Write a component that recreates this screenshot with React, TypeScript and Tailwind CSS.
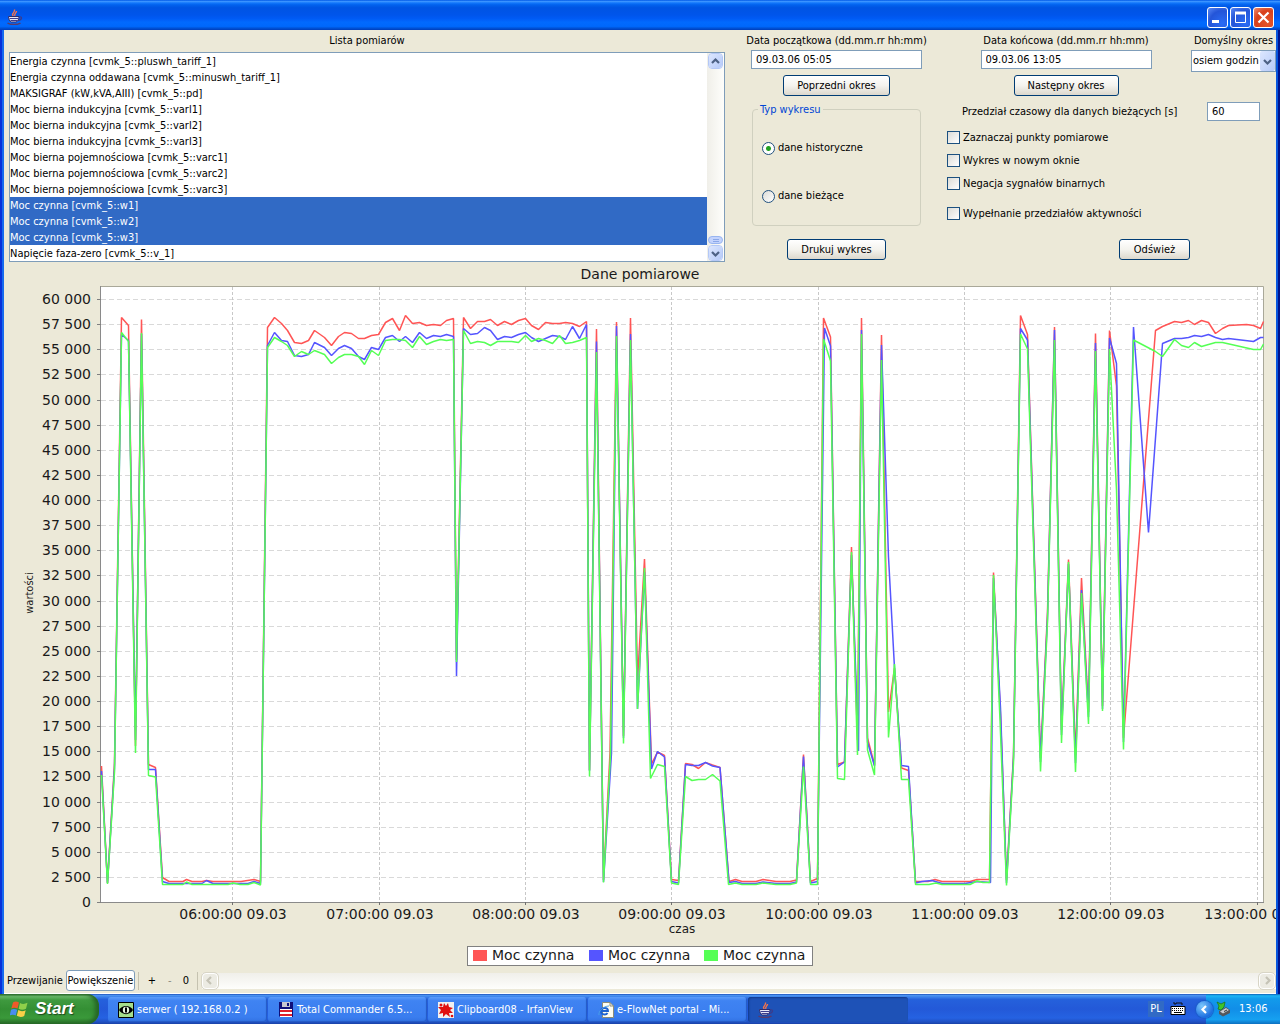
import React, { useState } from "react";

type Point = [number, number];

const signals = [
  "Energia czynna [cvmk_5::pluswh_tariff_1]",
  "Energia czynna oddawana [cvmk_5::minuswh_tariff_1]",
  "MAKSIGRAF (kW,kVA,AIII) [cvmk_5::pd]",
  "Moc bierna indukcyjna [cvmk_5::varl1]",
  "Moc bierna indukcyjna [cvmk_5::varl2]",
  "Moc bierna indukcyjna [cvmk_5::varl3]",
  "Moc bierna pojemnościowa [cvmk_5::varc1]",
  "Moc bierna pojemnościowa [cvmk_5::varc2]",
  "Moc bierna pojemnościowa [cvmk_5::varc3]",
  "Moc czynna [cvmk_5::w1]",
  "Moc czynna [cvmk_5::w2]",
  "Moc czynna [cvmk_5::w3]",
  "Napięcie faza-zero [cvmk_5::v_1]",
];

const red: Point[] = [
  [101.5, 766], [107.5, 883], [114.5, 763], [121.5, 317.5], [128.5, 325.5], [135.5, 746], [141.5, 319.5], [148.5, 764.5], [155.5, 767.5],
  [162.5, 877.5], [169, 881.5], [183, 881.5], [186.5, 879.5], [192, 881.5], [202, 881.5], [206.5, 880.5], [213, 881.5], [241, 881.5], [254, 879.5], [260.5, 881.5],
  [267.5, 327.5], [274.5, 317.5], [281.5, 323.5], [287.5, 330.5], [294.5, 342.5], [301.5, 343.5], [308.5, 340.5], [314.5, 330.5], [324.5, 337.5], [331.5, 345.5],
  [338.5, 336.5], [344.5, 332.5], [351.5, 333.5], [358.5, 338.5], [364.5, 338.5], [371.5, 335.5], [378.5, 334.5], [385.5, 322.5], [392.5, 318.5], [399.5, 330.5],
  [405.5, 315.5], [412.5, 323.5], [419.5, 322.5], [426.5, 325.5], [433.5, 324.5], [440.5, 325.5], [446.5, 320.5], [453.5, 318.5], [456.5, 660], [463.5, 317.5],
  [470.5, 328.5], [477.5, 321.5], [484.5, 321.5], [490.5, 319.5], [497.5, 325.5], [504.5, 321.5], [511.5, 324.5], [518.5, 320.5], [525.5, 318.5], [531.5, 325.5],
  [538.5, 329.5], [545.5, 322.5], [552.5, 323.5], [559.5, 323.5], [565.5, 322.5], [572.5, 323.5], [579.5, 326.5], [586.5, 321.5], [589.5, 770], [596.5, 329],
  [603.5, 880], [610, 753], [616.5, 322], [623.5, 736], [630.5, 318], [637.5, 680], [644.5, 559], [651.5, 764], [657.5, 752], [664.5, 755.5],
  [671.5, 879.5], [678.5, 880.5], [685.5, 763.5], [692, 764.5], [698.5, 768.5], [705.5, 762.5], [712.5, 765], [720, 767.5], [729, 881.5], [735.5, 879.5],
  [742, 881.5], [756, 881.5], [763, 879.5], [776, 881.5], [790, 881.5], [796.5, 880], [803.5, 754.5], [810.5, 881.5], [817.5, 878.5], [823.5, 318],
  [830.5, 337], [837.5, 764.5], [844.5, 762], [851.5, 547], [857.5, 740], [861.5, 318], [867.5, 738], [874.5, 765], [881.5, 335], [888.5, 712],
  [894.5, 668], [901.5, 768], [908.5, 770.5], [915.5, 881.5], [928, 881.5], [935, 879.5], [942, 881.5], [970, 881.5], [977, 879.5], [989.5, 879.5],
  [993.5, 572.5], [1000.5, 715], [1006.5, 880], [1013.5, 755], [1020.5, 315.5], [1027.5, 334.5], [1040.5, 758], [1047.5, 612], [1054.5, 327], [1061.5, 730],
  [1068.5, 559.5], [1075.5, 755], [1081.5, 578], [1088.5, 712], [1095.5, 333.5], [1102.5, 706], [1109.5, 330.5], [1116.5, 386], [1123.5, 738], [1155.5, 330.5],
  [1162.5, 326.5], [1174.5, 321.5], [1181.5, 322.5], [1188.5, 320.5], [1194.5, 324.5], [1201.5, 320.5], [1208.5, 322.5], [1215.5, 333.5], [1222.5, 328.5],
  [1228.5, 325.5], [1246.5, 324.5], [1253.5, 325.5], [1260.5, 328.5], [1263.5, 321.5],
];

const blue: Point[] = [
  [101.5, 771], [107.5, 883], [114.5, 768], [121.5, 334.5], [128.5, 340.5], [135.5, 740], [141.5, 334], [148.5, 769.5], [155.5, 769.5],
  [162.5, 881.5], [169, 883.5], [202, 883.5], [206.5, 880.5], [213, 883.5], [248, 883.5], [254, 881.5], [260.5, 883.5],
  [267.5, 345.5], [274.5, 332.5], [281.5, 340.5], [287.5, 341.5], [294.5, 355.5], [301.5, 356.5], [308.5, 354.5], [314.5, 342.5], [324.5, 347.5], [331.5, 355.5],
  [338.5, 348.5], [344.5, 345.5], [351.5, 348.5], [358.5, 356.5], [364.5, 359.5], [371.5, 347.5], [378.5, 349.5], [385.5, 337.5], [392.5, 335.5], [399.5, 341.5],
  [405.5, 336.5], [412.5, 342.5], [419.5, 332.5], [426.5, 338.5], [433.5, 335.5], [440.5, 336.5], [446.5, 334.5], [453.5, 336.5], [456.5, 676], [463.5, 328.5],
  [470.5, 334.5], [477.5, 333.5], [484.5, 327.5], [490.5, 330.5], [497.5, 339.5], [504.5, 336.5], [511.5, 337.5], [518.5, 334.5], [525.5, 332.5], [531.5, 337.5],
  [538.5, 341.5], [545.5, 338.5], [552.5, 335.5], [559.5, 336.5], [565.5, 339.5], [572.5, 326.5], [579.5, 338.5], [586.5, 324.5], [589.5, 771], [596.5, 341.5],
  [603.5, 882], [611.5, 753], [616.5, 326], [623.5, 738], [630.5, 334], [637.5, 709], [644.5, 572], [651.5, 769], [657.5, 751.5], [664.5, 757],
  [671.5, 881.5], [678.5, 883], [685.5, 764.5], [692, 765.5], [698.5, 765.5], [705.5, 762.5], [712.5, 766], [720, 767.5], [729, 882.5], [735.5, 881.5],
  [742, 883.5], [756, 883.5], [763, 882], [776, 883.5], [790, 883.5], [796.5, 882], [803.5, 756.5], [810.5, 883], [817.5, 881.5], [824.5, 328],
  [830.5, 346], [837.5, 767], [844.5, 762], [851.5, 555], [858.5, 751], [861.5, 330], [867.5, 742], [874.5, 766], [881.5, 345], [888.5, 557],
  [894.5, 668], [901.5, 765.5], [908.5, 766.5], [915.5, 883], [922, 881.5], [932, 880.5], [942, 883.5], [965, 883.5], [977, 881.5], [990.5, 882.5],
  [993.5, 578], [1000.5, 708], [1006.5, 883], [1013.5, 758], [1020.5, 328.5], [1027.5, 340], [1040.5, 762], [1047.5, 618], [1054.5, 330], [1061.5, 735],
  [1068.5, 564], [1075.5, 763], [1081.5, 590], [1088.5, 717], [1095.5, 343], [1102.5, 709], [1109.5, 338], [1116.5, 363.5], [1123.5, 742], [1133.5, 327],
  [1148.5, 532.5], [1162.5, 343.5], [1174.5, 338.5], [1181.5, 338.5], [1188.5, 337.5], [1194.5, 335.5], [1201.5, 336.5], [1208.5, 334.5], [1215.5, 337.5],
  [1222.5, 339.5], [1228.5, 338.5], [1253.5, 341.5], [1260.5, 337.5], [1263.5, 337.5],
];

const green: Point[] = [
  [101.5, 775], [107.5, 884], [114.5, 772], [121.5, 332.5], [128.5, 341.5], [135.5, 753], [141.5, 333], [148.5, 775.5], [155.5, 777],
  [162.5, 884.5], [183, 884.5], [186.5, 882], [192, 884.5], [228, 884.5], [233, 883], [240, 884.5], [248, 884.5], [254, 882.5], [260.5, 885],
  [267.5, 347.5], [274.5, 337.5], [281.5, 341.5], [287.5, 345.5], [294.5, 356.5], [301.5, 351.5], [308.5, 354.5], [314.5, 350.5], [324.5, 354.5], [331.5, 363.5],
  [338.5, 357.5], [344.5, 354.5], [351.5, 354.5], [358.5, 356.5], [364.5, 364.5], [371.5, 350.5], [378.5, 355.5], [385.5, 340.5], [392.5, 339.5], [399.5, 339.5],
  [405.5, 340.5], [412.5, 347.5], [419.5, 336.5], [426.5, 344.5], [433.5, 341.5], [440.5, 339.5], [446.5, 340.5], [453.5, 339.5], [456.5, 662], [463.5, 330.5],
  [470.5, 343.5], [477.5, 341.5], [484.5, 342.5], [490.5, 345.5], [497.5, 341.5], [504.5, 341.5], [511.5, 341.5], [518.5, 342.5], [525.5, 335.5], [531.5, 341.5],
  [538.5, 338.5], [545.5, 340.5], [552.5, 343.5], [559.5, 335.5], [565.5, 343.5], [572.5, 342.5], [579.5, 340.5], [586.5, 337.5], [589.5, 776.5], [596.5, 352],
  [603.5, 882.5], [610.5, 755], [616.5, 336], [623.5, 743.5], [630.5, 340], [637.5, 709], [644.5, 568], [650.5, 778.5], [657.5, 764.5], [664.5, 766.5],
  [671.5, 883], [678.5, 884.5], [685.5, 776.5], [692, 780.5], [698.5, 779.5], [705.5, 779.5], [712.5, 774.5], [720, 781], [728.5, 884.5], [735.5, 883],
  [742, 884.5], [756, 884.5], [763, 883], [776, 884.5], [790, 884.5], [796.5, 883], [803.5, 766.5], [810.5, 884.5], [817.5, 884.5], [823.5, 339],
  [830.5, 361], [837.5, 778.5], [844.5, 779.5], [851.5, 552], [857.5, 755], [861.5, 334], [867.5, 750], [874.5, 775], [881.5, 360], [888.5, 737.5],
  [894.5, 664], [901.5, 779.5], [908.5, 779.5], [915.5, 884.5], [929, 884.5], [936, 883], [942, 884.5], [970, 884.5], [977, 881], [983, 882.5], [989.5, 882.5],
  [993.5, 575], [1000, 720], [1006.5, 885.5], [1013.5, 763], [1020.5, 334], [1027.5, 349], [1040.5, 771.5], [1047.5, 622], [1054.5, 340], [1061.5, 743],
  [1068.5, 562], [1075.5, 772], [1081.5, 593], [1088.5, 724], [1095.5, 351], [1102.5, 711], [1109.5, 349], [1116.5, 490], [1123.5, 749.5], [1133.5, 340],
  [1155.5, 351.5], [1162.5, 356.5], [1174.5, 339.5], [1181.5, 345.5], [1188.5, 347.5], [1194.5, 342.5], [1201.5, 346.5], [1208.5, 344.5], [1215.5, 342.5],
  [1222.5, 342.5], [1253.5, 349.5], [1260.5, 349.5], [1263.5, 344],
];

const yTicks = Array.from({ length: 25 }, (_, i) => {
  const value = i * 2500;
  const label = value < 1000 ? String(value) : `${Math.floor(value / 1000)} ${String(value % 1000).padStart(3, "0")}`;
  return { label, y: Math.round(902 - i * 25.125) + 0.5 };
});

const xTicks = [232.5, 379.5, 525.5, 671.5, 818.5, 964.5, 1110.5, 1257.5].map((x, i) => ({
  x,
  label: `${String(i + 6).padStart(2, "0")}:00:00 09.03`,
}));

const toPoints = (p: Point[]) => p.map((q) => q.join(",")).join(" ");

const legend = [
  { x: 473, color: "#ff5555" },
  { x: 589, color: "#5555ff" },
  { x: 704, color: "#55ff55" },
];

function Chart() {
  return (
    <svg
      viewBox="4 262 1272 706"
      className="block w-full font-['DejaVu_Sans',sans-serif] text-[14px]"
      fill="#1a1a1a"
      role="img"
      aria-label="Dane pomiarowe"
    >
      <text x="640" y="279" textAnchor="middle">Dane pomiarowe</text>
      <rect x="100.5" y="286.5" width="1163" height="616" fill="#fff" />
      <g stroke="#d9d9d9" strokeDasharray="5 3" strokeWidth="1">
        {yTicks.map((t) => (
          <line key={t.y} x1="101" x2="1263" y1={t.y} y2={t.y} />
        ))}
      </g>
      <g stroke="#c8c8c8" strokeDasharray="3 2" strokeWidth="1">
        {xTicks.map((t) => (
          <line key={t.x} x1={t.x} x2={t.x} y1="287" y2="902" />
        ))}
      </g>
      <path d="M100.5 286.5H1263.5V902.5" fill="none" stroke="#a9a899" />
      <path d="M100.5 286V902.5H1264" fill="none" stroke="#8a8a8a" />
      {yTicks.map((t) => (
        <g key={t.y}>
          <line x1="97" x2="101" y1={t.y} y2={t.y} stroke="#808080" />
          <text x="91" y={t.y + 4.5} textAnchor="end">{t.label}</text>
        </g>
      ))}
      {xTicks.map((t) => (
        <g key={t.x}>
          <line x1={t.x} x2={t.x} y1="902" y2="905" stroke="#707070" />
          <text x={t.x + 0.5} y="919" textAnchor="middle">{t.label}</text>
        </g>
      ))}
      <g fill="none" strokeWidth="1.5" strokeLinejoin="bevel">
        <polyline points={toPoints(red)} stroke="#ff5555" />
        <polyline points={toPoints(blue)} stroke="#5555ff" />
        <polyline points={toPoints(green)} stroke="#55ff55" />
      </g>
      <text x="682" y="933" textAnchor="middle" className="text-[12px]">czas</text>
      <text transform="translate(33 593) rotate(-90)" textAnchor="middle" className="font-['DejaVu_Sans_Condensed','DejaVu_Sans',sans-serif] text-[11px]">
        wartości
      </text>
      <rect x="467.5" y="946.5" width="345" height="19" fill="#fff" stroke="#808080" />
      {legend.map((l) => (
        <g key={l.x}>
          <rect x={l.x} y="950" width="14" height="11" fill={l.color} />
          <text x={l.x + 19} y="960">Moc czynna</text>
        </g>
      ))}
    </svg>
  );
}

function JavaIcon() {
  return (
    <svg width="16" height="16" viewBox="0 0 16 16" fill="none" aria-hidden="true">
      <path d="M6.500 7C3.500 5 8.500 3.500 7.500 .5M8 7C6.500 5 9.500 4 9.500 2" stroke="#f4734a" strokeWidth="1.400" />
      <path d="M1.500 7.500H12C12 10 11 12.500 9 13H4.500C2.500 12.500 1.500 10 1.500 7.500Z" fill="#e6e6f6" stroke="#2c2c70" />
      <path d="M2.500 9.500H11.500M3.500 11.500H10.500" stroke="#3c3c8c" />
      <path d="M12 8C15.500 7 15.500 11 11 11.500" stroke="#3c3c8c" strokeWidth="1.300" />
      <path d="M.5 14C3 16 11 16 13.500 14" stroke="#5b3a68" strokeWidth="1.500" />
    </svg>
  );
}

function Chevron({ dir, color = "#4d6185" }: { dir: "up" | "down" | "left" | "right"; color?: string }) {
  const d = {
    up: "M1 6L4.500 2.500L8 6",
    down: "M1 3L4.500 6.500L8 3",
    left: "M6 1L2.500 4.500L6 8",
    right: "M3 1L6.500 4.500L3 8",
  }[dir];
  return (
    <svg width="9" height="9" viewBox="0 0 9 9" fill="none" aria-hidden="true">
      <path d={d} stroke={color} strokeWidth="2.200" />
    </svg>
  );
}

function ScrollButton({ dir }: { dir: "up" | "down" }) {
  return (
    <button
      aria-label={dir === "up" ? "Przewiń w górę" : "Przewiń w dół"}
      className="flex h-4 w-full items-center justify-center rounded-sm border border-white bg-linear-to-br from-[#dde7fe] to-[#b5c9f8] outline outline-[#b4c8f6] -outline-offset-1"
    >
      <Chevron dir={dir} />
    </button>
  );
}

function SwingButton({ className, children }: { className: string; children: React.ReactNode }) {
  return (
    <button className={`h-[21px] rounded-[3px] border border-[#003c74] bg-linear-to-b from-white via-[#f4f3ee] to-[#dcd8cd] whitespace-nowrap ${className}`}>
      {children}
    </button>
  );
}

function Field({ id, value, className }: { id: string; value: string; className: string }) {
  return <input id={id} defaultValue={value} className={`h-[19px] border border-[#7f9db9] bg-white px-1 outline-none ${className}`} />;
}

function Radio({ label, checked }: { label: string; checked?: boolean }) {
  return (
    <label className="flex h-4 items-center gap-[3px] whitespace-nowrap">
      <input
        type="radio"
        name="chart-type"
        defaultChecked={checked}
        className="size-[13px] appearance-none rounded-full border border-[#21517f] bg-linear-to-br from-[#dcdcd7] to-white checked:bg-[radial-gradient(circle,#22a122_0_2px,#ffffff_3px)]"
      />
      <span className="leading-[18px]">{label}</span>
    </label>
  );
}

function Check({ label }: { label: string }) {
  return (
    <label className="flex h-[23px] items-center gap-[3px] whitespace-nowrap">
      <input
        type="checkbox"
        className="size-[13px] appearance-none border border-[#1c5180] bg-linear-to-br from-[#dcdcd7] to-white checked:bg-[#22a122]"
      />
      {label}
    </label>
  );
}

function TitleBar() {
  const btn = "flex size-[21px] items-center justify-center rounded-[3px] border border-white";
  return (
    <header className="flex h-[30px] items-center justify-between bg-[linear-gradient(180deg,#0058e6_0,#3a93ff_5%,#1277fb_10%,#0262ee_16%,#0054e3_26%,#0055eb_50%,#005bf5_62%,#026afe_74%,#0068fb_88%,#0052d6_94%,#003dba_100%)] pt-1 pr-1.5 pl-[7px]">
      <JavaIcon />
      <div className="flex gap-0.5">
        <button aria-label="Minimalizuj" className={`${btn} bg-[radial-gradient(circle_at_75%_80%,#2a6cf5,#2455d8_60%,#5b8af5)]`}>
          <svg width="13" height="13" viewBox="0 0 13 13" aria-hidden="true"><path d="M1 9H8V12H1Z" fill="#fff" /></svg>
        </button>
        <button aria-label="Maksymalizuj" className={`${btn} bg-[radial-gradient(circle_at_75%_80%,#2a6cf5,#2455d8_60%,#5b8af5)]`}>
          <svg width="13" height="13" viewBox="0 0 13 13" fill="none" aria-hidden="true"><path d="M1.500 2V11.500H11.500V2" stroke="#fff" /><path d="M1 2H12" stroke="#fff" strokeWidth="3" /></svg>
        </button>
        <button aria-label="Zamknij" className={`${btn} bg-[radial-gradient(circle_at_75%_80%,#e4552a,#d8401c_60%,#ee8f75)]`}>
          <svg width="13" height="13" viewBox="0 0 13 13" aria-hidden="true"><path d="M1.500 1.500L11.500 11.500M11.500 1.500L1.500 11.500" stroke="#fff" strokeWidth="2.200" /></svg>
        </button>
      </div>
    </header>
  );
}

function SignalList() {
  const [selected, setSelected] = useState<number[]>([9, 10, 11]);
  const toggle = (i: number) => setSelected((s) => (s.includes(i) ? s.filter((n) => n !== i) : [...s, i]));
  return (
    <section className="min-w-0 flex-1 pl-[5px]">
      <h2 id="list-label" className="flex h-[22px] items-center justify-center">Lista pomiarów</h2>
      <div className="flex border border-[#7f9db9] bg-white">
        <ul role="listbox" aria-multiselectable="true" aria-labelledby="list-label" className="min-w-0 flex-1">
          {signals.map((s, i) => (
            <li
              key={s}
              role="option"
              aria-selected={selected.includes(i)}
              onClick={() => toggle(i)}
              className="h-4 truncate leading-[18px] aria-selected:bg-[#316ac5] aria-selected:text-white"
            >
              {s}
            </li>
          ))}
        </ul>
        <div className="flex w-[17px] flex-col bg-linear-to-r from-[#f0efe9] to-[#fefefb] px-px">
          <ScrollButton dir="up" />
          <div className="flex flex-1 items-end">
            <div className="mb-px flex h-2 w-full flex-col items-center justify-center gap-px rounded-sm border border-[#98b5f0] bg-[#c3d3fd]">
              <span className="h-px w-1.5 bg-[#8ba8e8]" />
              <span className="h-px w-1.5 bg-[#8ba8e8]" />
            </div>
          </div>
          <ScrollButton dir="down" />
        </div>
      </div>
    </section>
  );
}

function Controls() {
  return (
    <section className="flex w-[551px] shrink-0 pl-[26px]">
      <div className="flex w-[171px] shrink-0 flex-col items-center">
        <label htmlFor="start" className="h-5 leading-[22px] whitespace-nowrap">Data początkowa (dd.mm.rr hh:mm)</label>
        <Field id="start" value="09.03.06 05:05" className="w-full" />
        <SwingButton className="mt-1.5 w-[107px]">Poprzedni okres</SwingButton>
        <fieldset className="mt-2 h-[122px] w-[169px] rounded-[4px] border border-[#d0d0bf] pl-[9px]">
          <legend className="-ml-1 px-0.5 leading-[11px] text-[#0046d5]">Typ wykresu</legend>
          <div className="flex flex-col gap-8 pt-[25px]">
            <Radio label="dane historyczne" checked />
            <Radio label="dane bieżące" />
          </div>
        </fieldset>
        <SwingButton className="mt-[13px] w-[99px]">Drukuj wykres</SwingButton>
      </div>
      <div className="ml-[25px] flex flex-1 flex-col">
        <div className="flex justify-between">
          <div className="flex w-[238px] flex-col items-center">
            <label htmlFor="end" className="h-5 leading-[22px] whitespace-nowrap">Data końcowa (dd.mm.rr hh:mm)</label>
            <Field id="end" value="09.03.06 13:05" className="w-[171px]" />
            <SwingButton className="mt-1.5 w-[105px]">Następny okres</SwingButton>
          </div>
          <div className="flex w-[85px] flex-col items-center">
            <label htmlFor="period" className="h-5 leading-[22px] whitespace-nowrap">Domyślny okres</label>
            <div className="relative w-full">
              <select id="period" className="h-[22px] w-full appearance-none border border-[#7f9db9] bg-white pl-px outline-none">
                <option>osiem godzin</option>
              </select>
              <span className="pointer-events-none absolute inset-y-px right-px flex w-[15px] items-center justify-center rounded-[2px] bg-linear-to-br from-[#dde7fe] to-[#b5c9f8]">
                <Chevron dir="down" />
              </span>
            </div>
          </div>
        </div>
        <div className="mt-1.5 mr-4 mb-[5px] ml-[15px] flex items-center justify-between">
          <label htmlFor="interval" className="whitespace-nowrap">Przedział czasowy dla danych bieżących [s]</label>
          <Field id="interval" value="60" className="w-[53px]" />
        </div>
        <Check label="Zaznaczaj punkty pomiarowe" />
        <Check label="Wykres w nowym oknie" />
        <Check label="Negacja sygnałów binarnych" />
        <div className="mt-[7px]">
          <Check label="Wypełnanie przedziałów aktywności" />
        </div>
        <SwingButton className="mt-3.5 mr-[86px] w-[71px] self-end">Odśwież</SwingButton>
      </div>
    </section>
  );
}

function ZoomBar() {
  return (
    <div className="flex h-[26px] items-center border-b border-white pl-[3px]">
      <button className="whitespace-nowrap">Przewijanie</button>
      <button className="ml-[3px] h-[21px] w-[69px] rounded-[3px] border border-[#7f9db9] bg-white whitespace-nowrap">Powiększenie</button>
      <span className="ml-[3px] h-[18px] w-px bg-[#c5c2b0]" />
      <button className="ml-[5px] w-4">+</button>
      <button className="ml-0.5 w-4 text-[#8a8a80]">-</button>
      <button className="w-4">0</button>
      <span className="ml-[3px] h-[18px] w-px bg-[#c5c2b0]" />
      <div className="ml-1 flex h-4 flex-1 items-center justify-between bg-linear-to-b from-[#f0efea] to-[#fefefc]">
        <button aria-label="W lewo" className="flex size-4 items-center justify-center rounded-sm border border-white bg-[#ecebe3] outline outline-[#d8d5c6]">
          <Chevron dir="left" color="#c5c3b6" />
        </button>
        <button aria-label="W prawo" className="mr-px flex size-4 items-center justify-center rounded-sm border border-white bg-[#ecebe3] outline outline-[#d8d5c6]">
          <Chevron dir="right" color="#c5c3b6" />
        </button>
      </div>
    </div>
  );
}

function EyeIcon() {
  return (
    <svg width="16" height="16" viewBox="0 0 16 16" aria-hidden="true">
      <path d="M.5 .5H15.500V15.500H.5Z" fill="#a5dd8c" stroke="#000" />
      <path d="M1 8C4 2.500 12 2.500 15 8C12 13.500 4 13.500 1 8Z" fill="#000" />
      <circle cx="8" cy="8" r="3.200" fill="#e8f8e0" />
      <path d="M7 5.500H9V10.500H7Z" fill="#000" />
    </svg>
  );
}

function DiskIcon() {
  return (
    <svg width="16" height="16" viewBox="0 0 16 16" aria-hidden="true">
      <path d="M1 0H15V15H2L1 14Z" fill="#10107a" />
      <path d="M4 0H12V5H4Z" fill="#c8c8d0" />
      <path d="M9 1H11V4H9Z" fill="#10107a" />
      <path d="M2 7H14V15H2Z" fill="#fff" />
      <path d="M2 8H14V10H2ZM2 12H14V14H2Z" fill="#e0202a" />
    </svg>
  );
}

function IrfanIcon() {
  return (
    <svg width="16" height="16" viewBox="0 0 16 16" aria-hidden="true">
      <path d="M0 0H16V16H0Z" fill="#f0f0f0" />
      <path d="M6 1L8 4L10 1L11 5L15 6L12 8L15 11L11 11L12 15L8 12L5 15V11L1 12L3 8L0 5L5 5Z" fill="#e01010" />
      <circle cx="3" cy="3" r="1.500" fill="#e01010" />
      <circle cx="14" cy="14" r="1.300" fill="#e01010" />
    </svg>
  );
}

function IeIcon() {
  return (
    <svg width="16" height="16" viewBox="0 0 16 16" fill="none" aria-hidden="true">
      <path d="M4.500 .5H12L15.500 4V15.500H4.500Z" fill="#fffdf0" stroke="#8c8c78" />
      <path d="M12 .5V4H15.500" stroke="#8c8c78" />
      <path d="M3 9H10C10 5 3.500 5 3 9C3 13 8 13.500 9.500 11" stroke="#1e62d0" strokeWidth="1.900" />
      <path d="M1 13C0 10 5 4 11 4" stroke="#4aa0e8" />
    </svg>
  );
}

const tasks = [
  { label: "serwer ( 192.168.0.2 )", icon: <EyeIcon /> },
  { label: "Total Commander 6.5...", icon: <DiskIcon /> },
  { label: "Clipboard08 - IrfanView", icon: <IrfanIcon /> },
  { label: "e-FlowNet portal - Mi...", icon: <IeIcon /> },
];

function Taskbar() {
  return (
    <footer className="flex h-[30px] bg-[linear-gradient(180deg,#1c4fb8_0,#4a92f0_5%,#3a80ea_10%,#2561dc_18%,#2359d8_50%,#2562e2_80%,#1f4fc0_94%,#1941a5_100%)] text-white">
      <button className="flex w-[99px] shrink-0 items-center gap-1.5 rounded-r-xl bg-[linear-gradient(180deg,#2f6f2f_0,#6cbb6c_8%,#3f9a3f_20%,#348f34_50%,#3a993a_80%,#276b27_100%)] pl-2.5 shadow-[inset_-4px_0_4px_#266526] font-['Liberation_Sans',sans-serif] text-[17px] font-bold italic text-shadow-[1px_1px_1px_#1d4a1d]">
        <svg width="19" height="18" viewBox="0 0 19 18" aria-hidden="true">
          <path d="M3 2.500C5 1 7 1.500 9 2.500L7.500 8.500C5.500 7.500 3.500 7.300 1.300 8.500Z" fill="#ee5a2a" />
          <path d="M10 3C12.500 4.500 15 4 17.500 2.800L16 8.800C13.500 10 11 10 8.600 8.800Z" fill="#8fd04a" />
          <path d="M1 9.800C3 8.500 5.300 8.800 7.200 9.800L5.700 15.500C4 14.500 2 14.200 -.3 15.500Z" fill="#4a8df0" />
          <path d="M8.300 10.100C10.500 11.500 13.200 11.500 15.700 10.200L14.200 16C11.700 17.400 9 17 6.800 15.800Z" fill="#fad048" />
        </svg>
        Start
      </button>
      <nav className="ml-[9px] flex min-w-0 flex-1 gap-px pt-[3px] pb-0.5">
        {tasks.map((t) => (
          <button
            key={t.label}
            className="flex w-[159px] items-center gap-[3px] rounded-[3px] bg-[linear-gradient(180deg,#5c9cfa_0,#3f83f2_15%,#3a7def_80%,#3272e2_100%)] pl-2.5 whitespace-nowrap shadow-[inset_-1px_-1px_1px_#2459c4]"
          >
            {t.icon}
            {t.label}
          </button>
        ))}
        <button aria-label="Java" className="flex w-[160px] items-center rounded-[3px] bg-[#1e52b7] pl-2.5 shadow-[inset_1px_1px_2px_#123a8c]">
          <JavaIcon />
        </button>
      </nav>
      <div className="flex items-center">
        <span className="flex h-4 w-4 items-center justify-center bg-[#316ac5]">PL</span>
        <svg className="ml-1.5" width="16" height="14" viewBox="0 0 16 14" aria-hidden="true">
          <path d="M4 0V2H6V1H12V3" fill="none" stroke="#101010" />
          <path d="M1 4.500H15V12.500H1Z" fill="#fff" stroke="#000" />
          <path d="M2 6.500H14M2 8.500H14" stroke="#000" strokeDasharray="1 1" />
          <path d="M4 10.500H12" stroke="#000" />
        </svg>
      </div>
      <div className="ml-5 flex h-full w-[74px] shrink-0 items-center bg-[linear-gradient(180deg,#0d5fb4_0,#1bb5f5_6%,#129beb_16%,#118ee8_50%,#16a0f0_85%,#0d70c0_100%)]">
        <button aria-label="Pokaż ukryte ikony" className="-ml-2.5 flex size-[17px] shrink-0 items-center justify-center rounded-full bg-[radial-gradient(circle_at_35%_30%,#7cc8fc,#1c6fe0_70%)] shadow-[0_0_1px_1px_#1a5cc8]">
          <Chevron dir="left" color="#ffffff" />
        </button>
        <svg className="ml-[3px]" width="15" height="16" viewBox="0 0 15 16" aria-hidden="true">
          <path d="M3 10L10 6L14 9V12L7 15.500L3 13Z" fill="#55585c" />
          <path d="M4 10.500L10 7L13 9L7 12.500Z" fill="#c8ccd0" />
          <path d="M8 10.500L11 9" stroke="#333" />
          <path d="M1 1L5 3L9 1L8 6L5 9L2 8L3 5Z" fill="#3fc52c" stroke="#1c7a18" strokeWidth=".8" />
        </svg>
        <time className="ml-2 leading-[18px]">13:06</time>
      </div>
    </footer>
  );
}

export default function App() {
  return (
    <div className="flex min-h-screen flex-col bg-[#ece9d8] font-['DejaVu_Sans_Condensed','DejaVu_Sans',sans-serif] text-[11px] leading-4 text-black">
      <TitleBar />
      <div className="flex flex-1 flex-col shadow-[inset_2px_0_#0831d9,inset_4px_0_#166aee,inset_-2px_0_#00138c,inset_-4px_0_#0855dd]">
        <main className="mx-1 flex flex-1 flex-col justify-between">
          <div className="flex">
            <SignalList />
            <Controls />
          </div>
          <Chart />
          <ZoomBar />
        </main>
      </div>
      <Taskbar />
    </div>
  );
}
